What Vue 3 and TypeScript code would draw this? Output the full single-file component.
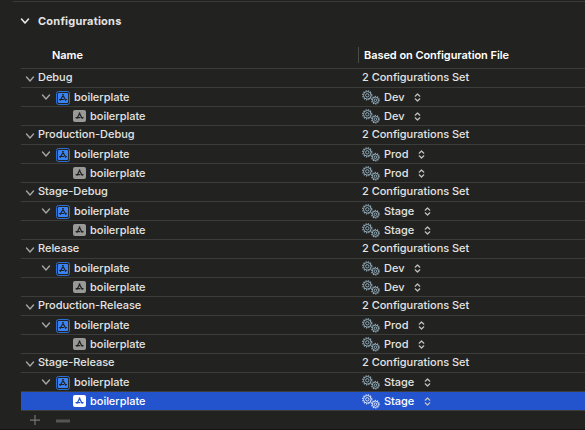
<script setup lang="ts">
interface Row {
  kind: 'group' | 'project' | 'target'
  name: string
  value: string
  selected: boolean
}

const configurations: [string, string][] = [
  ['Debug', 'Dev'],
  ['Production-Debug', 'Prod'],
  ['Stage-Debug', 'Stage'],
  ['Release', 'Dev'],
  ['Production-Release', 'Prod'],
  ['Stage-Release', 'Stage'],
]

const rows: Row[] = configurations.flatMap(([name, file]): Row[] => [
  { kind: 'group', name, value: '2 Configurations Set', selected: false },
  { kind: 'project', name: 'boilerplate', value: file, selected: false },
  { kind: 'target', name: 'boilerplate', value: file, selected: name === 'Stage-Release' },
])
</script>

<template>
  <main class="panel">
    <header class="section">
      <svg class="chevron" viewBox="0 0 10 8"><path d="M1.5 2 5 6 8.5 2" /></svg>
      <h2>Configurations</h2>
    </header>
    <div class="table">
      <div class="head">
        <span class="head-name">Name</span>
        <span class="head-file">Based on Configuration File</span>
      </div>
      <div v-for="(row, i) in rows" :key="i" class="row" :class="[row.kind, { selected: row.selected }]">
        <div class="name">
          <svg v-if="row.kind !== 'target'" class="chevron" viewBox="0 0 10 8"><path d="M1.5 2 5 6 8.5 2" /></svg>
          <svg v-if="row.kind === 'project'" class="project-icon" viewBox="0 0 14 14">
            <rect class="frame" x=".5" y=".5" width="13" height="13" rx="2" />
            <rect class="tile" x="1.9" y="1.9" width="10.2" height="10.2" rx="1" />
            <path class="glyph" d="M6.4 3.3 9.9 9.7M7.6 3.3 4.1 9.7M3.1 8.5H8M9.2 8.5h1.7" />
          </svg>
          <svg v-if="row.kind === 'target'" class="target-icon" viewBox="0 0 13 12">
            <rect class="tile" width="13" height="12" rx="2" />
            <path class="glyph" d="M6 2.6 9.4 8.8M7.1 2.6 3.8 8.8M2.6 7.7H7.4M8.8 7.7h1.7" />
          </svg>
          <span class="label">{{ row.name }}</span>
        </div>
        <div class="file">
          <svg v-if="row.kind !== 'group'" class="gears" viewBox="0 0 18 15">
            <circle class="teeth big" cx="5.3" cy="5.3" r="4.6" />
            <circle class="ring" cx="5.3" cy="5.3" r="3.8" />
            <circle class="ring" cx="5.3" cy="5.3" r="1.7" />
            <circle class="teeth" cx="13.4" cy="10.2" r="3.8" />
            <circle class="ring" cx="13.4" cy="10.2" r="3.1" />
            <circle class="ring" cx="13.4" cy="10.2" r="1.3" />
          </svg>
          <span class="value">{{ row.value }}</span>
          <svg v-if="row.kind !== 'group'" class="stepper" viewBox="0 0 7 9">
            <path d="M1.2 3.2 3.5 1l2.3 2.2M1.2 5.8 3.5 8l2.3-2.2" />
          </svg>
        </div>
      </div>
    </div>
    <footer class="actions">
      <svg viewBox="0 0 50 12"><path class="plus" d="M9 6.1h10M14 1.1v10" /><path class="minus" d="M35 7h14" /></svg>
    </footer>
  </main>
</template>

<style>
body {
  background: #222221;
}
</style>

<style scoped>
.panel {
  box-sizing: border-box;
  height: 430px;
  overflow: hidden;
  background: #222221;
  border-top: 1px solid #222221;
  border-bottom: 1px solid #171315;
  color: #e4e4e3;
  font: 500 11px/18px Inter, "Liberation Sans", sans-serif;
  letter-spacing: -0.03px;
  white-space: nowrap;
}
svg {
  display: block;
  flex: none;
  fill: none;
}
.section {
  display: flex;
  align-items: center;
  box-sizing: border-box;
  height: 42px;
  margin-left: 13px;
  padding: 0 0 4px 7px;
  border-top: 1px solid #3a3a39;
}
h2 {
  margin: 0 0 0 8px;
  font-size: 11px;
  font-weight: 700;
  letter-spacing: 0.22px;
}
.chevron {
  width: 10px;
  height: 8px;
  stroke: #a5a5a4;
  stroke-width: 1.4;
  stroke-linecap: round;
  stroke-linejoin: round;
}
.section .chevron {
  stroke: #e8e8e7;
  stroke-width: 1.6;
}
.table {
  margin-left: 21px;
}
.head {
  display: grid;
  grid-template-columns: 337px 1fr;
  box-sizing: border-box;
  height: 26px;
  padding-top: 4px;
  border-bottom: 1px solid #3c3c3b;
  color: #fff;
  font-weight: 600;
  line-height: 16px;
  letter-spacing: -0.06px;
}
.head-name {
  padding-left: 31px;
}
.head-file {
  height: 16px;
  padding-left: 5px;
  border-left: 1px solid #4a4a49;
}
.row {
  display: grid;
  grid-template-columns: 341px 1fr;
  height: 18px;
  border-bottom: 1px solid #3c3c3b;
}
.name,
.file {
  display: flex;
  height: 18px;
  align-items: center;
}
.group .name {
  padding-left: 4px;
}
.group .chevron {
  margin-top: 2px;
}
.group .label {
  margin-left: 3px;
}
.group .label,
.group .value {
  margin-top: -2px;
}
.project .name {
  padding-left: 20px;
}
.project-icon {
  width: 14px;
  height: 14px;
  margin: 1px 4px 0 5px;
}
.target .name {
  padding-left: 52px;
}
.target-icon {
  width: 13px;
  height: 12px;
  margin: 0 4px 0 0;
}
.project-icon .frame {
  stroke: #2e6fd2;
}
.project-icon .tile {
  fill: #3b82f2;
}
.target-icon .tile {
  fill: #999998;
}
.glyph {
  stroke: #222221;
  stroke-width: 1.2;
}
.gears {
  width: 18px;
  height: 15px;
  margin-right: 4px;
  stroke: #98b3c2;
}
.gears .ring {
  stroke-width: 0.9;
}
.gears .teeth {
  stroke-width: 1.1;
  stroke-dasharray: 1.2 1.19;
}
.gears .teeth.big {
  stroke-dasharray: 1.2 1.208;
}
.stepper {
  width: 7px;
  height: 9px;
  margin-left: 10px;
  stroke: #c4c4c3;
  stroke-width: 1.2;
  stroke-linecap: round;
  stroke-linejoin: round;
}
.selected {
  background: #2354cd;
  color: #fff;
}
.selected .gears {
  stroke: #e2ecff;
}
.selected .target-icon .tile {
  fill: #fff;
}
.selected .glyph {
  stroke: #2354cd;
}
.actions {
  padding: 3px 0 0 21px;
}
.actions svg {
  width: 50px;
  height: 12px;
}
.plus {
  stroke: #757574;
  stroke-width: 1.2;
}
.minus {
  stroke: #555554;
  stroke-width: 3;
}
</style>
